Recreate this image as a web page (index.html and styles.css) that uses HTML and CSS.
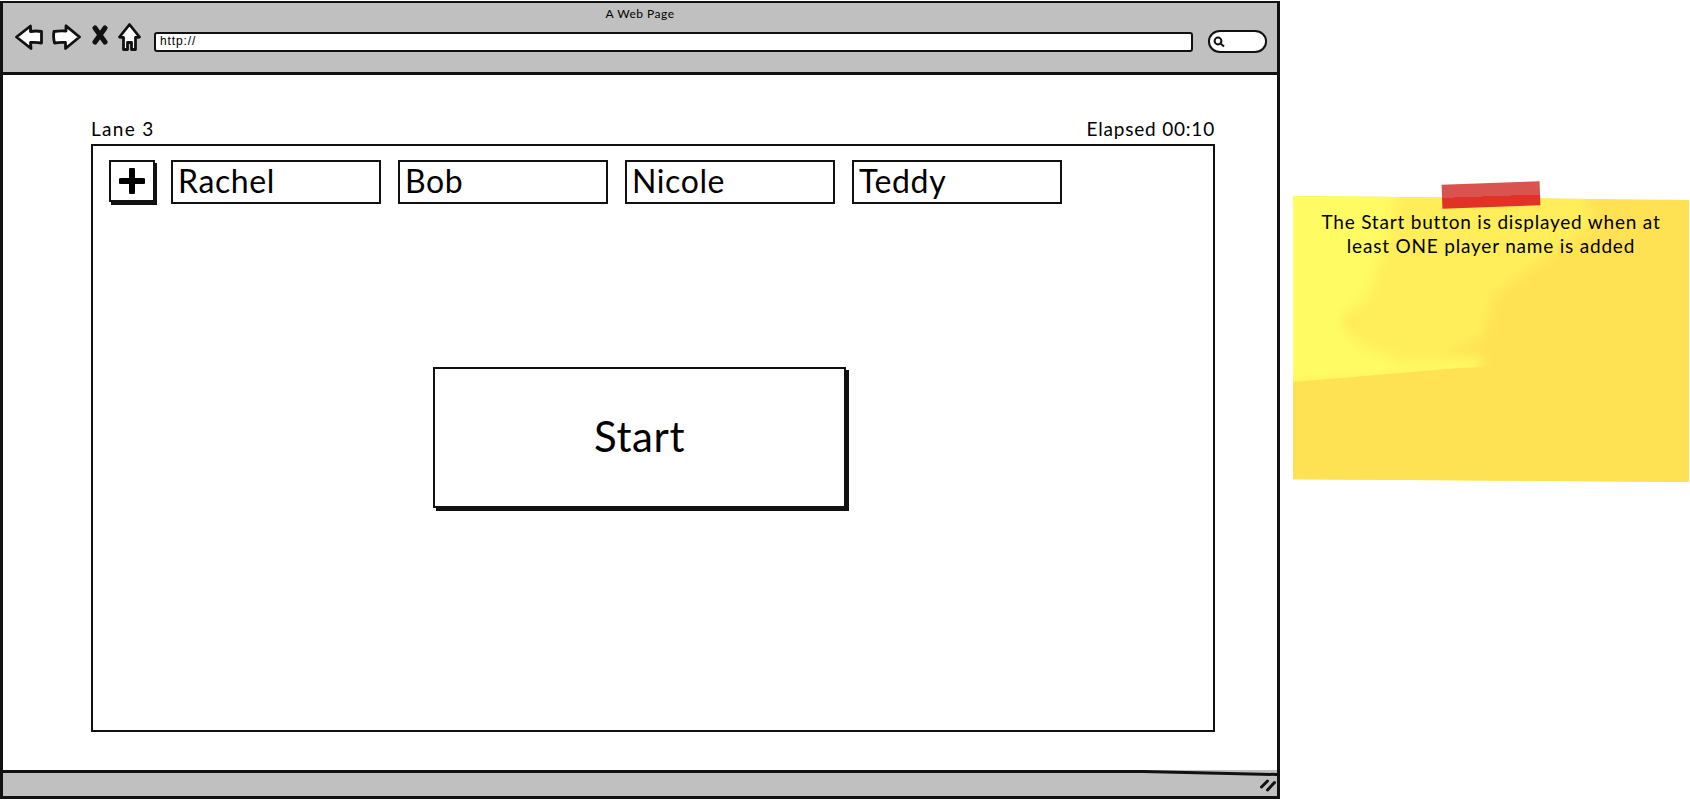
FILE: index.html
```html
<!DOCTYPE html>
<html lang="en">
<head>
  <meta charset="UTF-8" />
  <meta name="viewport" content="width=device-width, initial-scale=1.0" />
  <title>A Web Page</title>
  <link rel="stylesheet" href="styles.css">
</head>
<body>

  <div class="browser">
    <header class="toolbar">
      <div class="page-title">A Web Page</div>
      <div class="nav">
        <svg class="nav-icon back" viewBox="0 0 28 26"><path d="M1.5 13 L15.5 2 L15.5 7.5 Q21 6.5 26.5 7.5 L26.5 19 Q21 18 15.5 18.5 L16 24.5 Z" /></svg>
        <svg class="nav-icon forward" viewBox="0 0 29 26"><path d="M27.5 13 L14 1.8 L14 7 Q8 6.5 2 7.5 Q1 13 2.5 19 Q8 18 13.5 18.5 L13.5 24.5 Z" /></svg>
        <svg class="nav-icon stop" viewBox="0 0 18 20"><path d="M4 3 L14 17 M14 3 L4 17" /></svg>
        <svg class="nav-icon home" viewBox="0 0 23 28"><path d="M11.5 1.5 L21.5 14 L17.5 14.5 L17.5 26.5 L13.5 26.5 L13.5 19.5 L9.5 19.5 L9.5 26.5 L5.5 26.5 L5.5 14.5 L1.5 14 Z" /></svg>
        <div class="address">http://</div>
        <div class="search">
          <svg class="search-icon" viewBox="0 0 12 12"><circle cx="5" cy="5" r="3.4" /><path d="M7.5 7.5 L11 10.5" /></svg>
        </div>
      </div>
    </header>

    <main class="content">
      <div class="lane-info">
        <span class="lane-name">Lane 3</span>
        <span>Elapsed 00:10</span>
      </div>
      <section class="lane">
        <div class="players">
          <button class="add-btn">
            <svg viewBox="0 0 26 26"><path d="M13 2 L13 24 M2 13 L24 13" /></svg>
          </button>
          <div class="player">Rachel</div>
          <div class="player">Bob</div>
          <div class="player">Nicole</div>
          <div class="player">Teddy</div>
        </div>
        <button class="start-btn">Start</button>
      </section>
    </main>

    <footer class="statusbar">
      <svg class="status-edge" viewBox="0 0 1274 6" preserveAspectRatio="none"><polygon points="0,0 1140,0 1274,3 1274,6 1140,3 0,3" /></svg>
      <svg class="grip" viewBox="0 0 16 14"><path d="M1.5 9 L7.5 3 M7.5 12 L14.5 4.5" /></svg>
    </footer>
  </div>

  <aside class="note">
    <svg class="note-bg" viewBox="0 0 396 286" preserveAspectRatio="none">
      <defs>
        <filter id="soft"><feGaussianBlur stdDeviation="6" /></filter>
      </defs>
      <polygon class="blot-mid" filter="url(#soft)" points="60,-10 290,-10 300,30 240,70 200,100 190,140 140,165 60,175" />
      <polygon class="blot-light" filter="url(#soft)" points="-10,-10 105,-10 95,40 75,100 50,125 70,150 110,165 190,160 180,178 -10,190" />
      <polygon class="blot-base" points="0,186 165,172 396,165 396,286 0,286" />
    </svg>
    <div class="tape"></div>
    <p class="note-text">The Start button is displayed when at least ONE player name is added</p>
  </aside>

</body>
</html>
```

FILE: styles.css
```css
body {
  margin: 0;
  width: 1690px;
  height: 800px;
  overflow: hidden;
  background: #fff;
  color: #000;
  font-family: "Lato", sans-serif;
  display: flex;
  align-items: flex-start;
}

button {
  font-family: inherit;
  color: inherit;
  background: #fff;
  padding: 0;
}

.browser {
  width: 1280px;
  height: 798px;
  margin-top: 1px;
  box-sizing: border-box;
  border: 3px solid #111;
  border-top-width: 2px;
  display: flex;
  flex-direction: column;
  flex-shrink: 0;
}

/* toolbar */
.toolbar {
  height: 72px;
  box-sizing: border-box;
  background: #c0c0c0;
  border-bottom: 3px solid #111;
  padding: 3px 10px 0 12px;
}

.page-title {
  text-align: center;
  font-size: 12px;
  line-height: 15px;
  letter-spacing: 0.5px;
  padding-right: 2px;
}

.nav {
  display: flex;
  align-items: center;
}

.nav-icon {
  fill: #fff;
  stroke: #111;
  stroke-width: 2.8;
  stroke-linejoin: round;
  flex-shrink: 0;
}

.back { width: 28px; height: 26px; margin-right: 9px; }
.forward { width: 29px; height: 26px; margin-right: 10px; }
.stop { width: 18px; height: 20px; margin-right: 9px; stroke-width: 5; stroke-linecap: round; fill: none; margin-top: -4px; }
.home { width: 23px; height: 28px; margin-right: 13px; }

.address {
  flex: 1;
  height: 20px;
  box-sizing: border-box;
  margin-top: 9px;
  background: #fff;
  border: 2.5px solid #111;
  border-radius: 3px;
  font-family: "Liberation Sans", sans-serif;
  font-size: 12px;
  line-height: 15px;
  padding-left: 4px;
  letter-spacing: 0.9px;
}

.search {
  width: 59px;
  height: 23px;
  box-sizing: border-box;
  margin: 9px 0 0 15px;
  background: #fff;
  border: 2.5px solid #111;
  border-radius: 12px / 11px;
  display: flex;
  align-items: center;
  padding-left: 3px;
}

.search-icon {
  width: 12px;
  height: 12px;
  fill: none;
  stroke: #111;
  stroke-width: 2;
}

/* main area */
.content {
  flex: 1;
  background: #fff;
  padding: 43px 62px 38px 88px;
  display: flex;
  flex-direction: column;
}

.lane-info {
  display: flex;
  justify-content: space-between;
  font-size: 19px;
  line-height: 22px;
  letter-spacing: 0.8px;
  height: 26px;
}

.lane-name {
  letter-spacing: 1.3px;
}

.lane {
  flex: 1;
  box-sizing: border-box;
  border: 2.5px solid #111;
  padding: 14px 14px 0 16px;
  display: flex;
  flex-direction: column;
}

.players {
  display: flex;
  align-items: flex-start;
}

.add-btn {
  width: 46px;
  height: 42px;
  box-sizing: border-box;
  border: 2px solid #111;
  box-shadow: 2px 3px 0 #111;
  margin-right: 16px;
  display: flex;
  align-items: center;
  justify-content: center;
}

.add-btn svg {
  width: 26px;
  height: 26px;
  fill: none;
  stroke: #000;
  stroke-width: 6;
  stroke-linecap: round;
}

.player {
  width: 210px;
  height: 44px;
  box-sizing: border-box;
  border: 2.5px solid #111;
  margin-right: 17px;
  padding-left: 5px;
  font-size: 32px;
  line-height: 37px;
  letter-spacing: 0.6px;
}

.start-btn {
  width: 413px;
  height: 141px;
  box-sizing: border-box;
  margin: 163px 0 0 324px;
  padding-bottom: 4px;
  border: 2px solid #111;
  box-shadow: 3px 3px 0 #111;
  font-size: 42px;
  letter-spacing: 0.6px;
}

/* status bar */
.statusbar {
  position: relative;
  height: 26px;
  box-sizing: border-box;
  background: #c0c0c0;
  display: flex;
  justify-content: flex-end;
  align-items: center;
  padding: 3px 1px 0 0;
}

.status-edge {
  position: absolute;
  left: 0;
  top: 0;
  width: 100%;
  height: 6px;
  fill: #111;
}

.grip {
  width: 16px;
  height: 14px;
  fill: none;
  stroke: #111;
  stroke-width: 3;
  stroke-linecap: round;
}

/* sticky note */
.note {
  position: relative;
  width: 396px;
  height: 286px;
  margin: 196px 0 0 13px;
}

.note-bg {
  position: absolute;
  inset: 0;
  width: 100%;
  height: 100%;
  background: #ffe254;
  clip-path: polygon(0 0, 100% 4px, 100% 100%, 0 99%);
}

.blot-light { fill: #fffb62; }
.blot-mid { fill: #ffee5a; }
.blot-base { fill: #ffe254; }

.tape {
  position: absolute;
  left: 149px;
  top: -13px;
  width: 98px;
  height: 24px;
  background: linear-gradient(#d9534f 55%, #e23228 55%);
  transform: rotate(-2deg);
}

.note-text {
  position: relative;
  margin: 0;
  padding: 14px 24px 0;
  text-align: center;
  font-size: 19px;
  line-height: 24px;
  letter-spacing: 0.8px;
}
```
